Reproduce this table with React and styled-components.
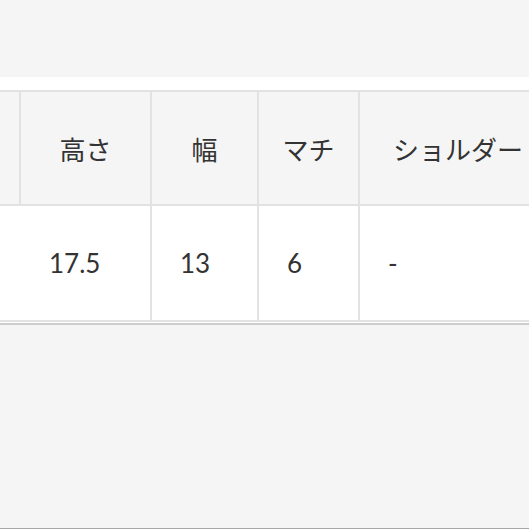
import React from "react";
import styled, { createGlobalStyle } from "styled-components";

const Global = createGlobalStyle`
  html, body { margin: 0; padding: 0; background: #f5f5f5; }
  body { font-family: Lato, "Noto Sans CJK JP", sans-serif; color: #333; }
`;

const Page = styled.div`
  height: 529px;
  box-sizing: border-box;
  display: flex;
  flex-direction: column;
  border-bottom: 1px solid #a8a8a8;
  overflow: hidden;
`;

const TopSpace = styled.div`
  height: 77px;
  flex: none;
  background: #f5f5f5;
`;

const Section = styled.section`
  flex: none;
  background: #fff;
  padding: 13px 0 1px;
  border-bottom: 2px solid #cdcdcd;
  overflow: hidden;
`;

const Table = styled.div`
  display: grid;
  grid-template-columns: 19px 129px 105px 99px 196px;
  grid-template-rows: 112px 114px;
  gap: 2px;
  background: #e2e2e2;
  border-top: 2px solid #e2e2e2;
  border-bottom: 2px solid #e2e2e2;
  width: max-content;
`;

const Cell = styled.div`
  display: flex;
  align-items: center;
  justify-content: ${(p) => (p.$head ? "center" : "flex-start")};
  padding-left: ${(p) => (p.$head ? "0" : "28px")};
  background: ${(p) => (p.$head ? "#f5f5f5" : "#fff")};
  font-size: 26px;
  white-space: nowrap;
  overflow: hidden;
  color: #333;
`;

const heads = ["", "高さ", "幅", "マチ", "ショルダー"];
const values = ["", "17.5", "13", "6", "-"];

export default function App() {
  return (
    <>
      <Global />
      <Page>
        <TopSpace />
        <Section>
          <Table>
            {heads.map((h, i) => (
              <Cell key={"h" + i} $head>
                {h}
              </Cell>
            ))}
            {values.map((v, i) => (
              <Cell key={"v" + i}>{v}</Cell>
            ))}
          </Table>
        </Section>
      </Page>
    </>
  );
}
